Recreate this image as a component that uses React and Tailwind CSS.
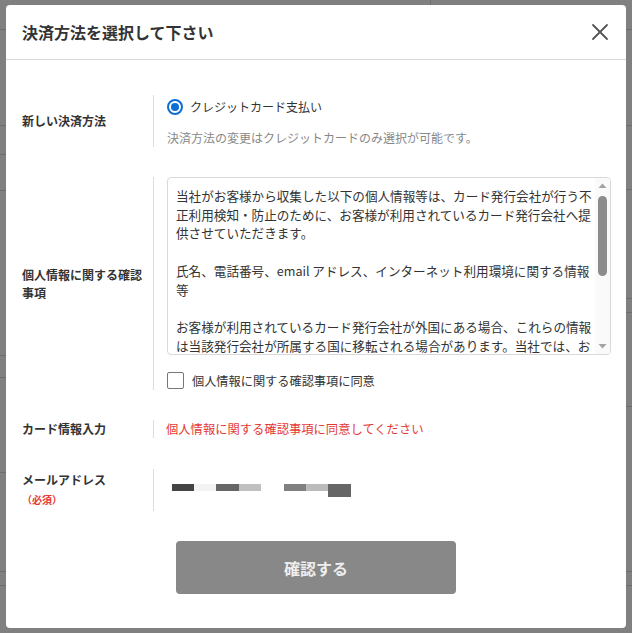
import React from "react";

const font = { fontFamily: '"Noto Sans CJK JP", "Noto Sans", sans-serif' };

function Row({ label, children, className = "" }) {
  return (
    <div className={`flex items-center ${className}`}>
      <div className="w-[131px] shrink-0 text-[12px] font-bold text-[#333] leading-[18px]">{label}</div>
      <div className="flex-1 border-l border-[#ddd] pl-[13px] self-stretch flex flex-col justify-center">{children}</div>
    </div>
  );
}

export default function App() {
  return (
    <div className="relative w-[632px] h-[633px] bg-[#808080] overflow-hidden" style={font}>
      {/* background page lines behind overlay */}
      <div className="absolute left-0 w-[6px] top-[29px] h-px bg-[#6e6e6e]" />
      <div className="absolute left-0 w-[6px] top-[125px] h-px bg-[#6e6e6e]" />
      <div className="absolute left-0 w-[6px] top-[154px] h-px bg-[#6e6e6e]" />
      <div className="absolute left-0 w-[6px] top-[190px] h-px bg-[#6e6e6e]" />
      <div className="absolute left-0 w-[6px] top-[355px] h-px bg-[#6e6e6e]" />
      <div className="absolute left-0 w-[6px] top-[377px] h-px bg-[#6e6e6e]" />
      <div className="absolute left-0 w-[6px] top-[472px] h-px bg-[#6e6e6e]" />
      <div className="absolute left-0 w-[6px] top-[571px] h-px bg-[#6e6e6e]" />
      <div className="absolute left-0 w-[6px] top-[585px] h-px bg-[#6e6e6e]" />
      <div className="absolute right-0 w-[6px] top-[29px] h-px bg-[#6e6e6e]" />
      <div className="absolute right-0 w-[6px] top-[125px] h-px bg-[#6e6e6e]" />
      <div className="absolute right-0 w-[6px] top-[189px] h-px bg-[#6e6e6e]" />
      <div className="absolute right-0 w-[6px] top-[298px] h-px bg-[#6e6e6e]" />
      <div className="absolute right-0 w-[6px] top-[312px] h-px bg-[#6e6e6e]" />
      <div className="absolute right-0 w-[6px] top-[406px] h-px bg-[#6e6e6e]" />
      <div className="absolute right-0 w-[6px] top-[571px] h-px bg-[#6e6e6e]" />
      <div className="absolute right-0 w-[6px] top-[585px] h-px bg-[#6e6e6e]" />
      <div className="absolute left-[430px] top-0 w-px h-[5px] bg-[#6e6e6e]" />

      {/* modal */}
      <div className="absolute left-[6px] top-[5px] w-[620px] h-[623px] bg-white rounded-[4px] flex flex-col">
        <div className="h-[55px] shrink-0 border-b border-[#d9d9d9] flex items-center justify-between pl-[16px] pr-[16px]">
          <div className="text-[16px] font-bold text-[#333] leading-[24px]">決済方法を選択して下さい</div>
          <svg width="18" height="18" viewBox="0 0 18 18" className="mr-[1px]">
            <path d="M2 2 L16 16 M16 2 L2 16" stroke="#555" strokeWidth="1.8" strokeLinecap="round" />
          </svg>
        </div>

        <div className="pt-[35px] pl-[16px] pr-[15px] flex flex-col">
          <Row label="新しい決済方法" className="h-[52px]">
            <div className="flex items-center h-[24px]">
              <div className="w-[16px] h-[16px] rounded-full border-[2px] border-[#0d6ed6] flex items-center justify-center">
                <div className="w-[8px] h-[8px] rounded-full bg-[#0d6ed6]" />
              </div>
              <span className="ml-[7px] text-[12px] text-[#333] leading-[18px]">クレジットカード支払い</span>
            </div>
            <div className="mt-[9px] text-[12px] text-[#888] leading-[19px]">決済方法の変更はクレジットカードのみ選択が可能です。</div>
          </Row>

          <Row label={<span className="block pr-[6px]">個人情報に関する確認事項</span>} className="mt-[30px] h-[213px]">
            <div className="h-[178px] border border-[#d9d9d9] rounded-[4px] overflow-hidden flex">
              <div className="flex-1 pt-[9px] pl-[8px] pr-0 text-[12.6px] text-[#333] leading-[18.7px]">
                <p>当社がお客様から収集した以下の個人情報等は、カード発行会社が行う不正利用検知・防止のために、お客様が利用されているカード発行会社へ提供させていただきます。</p>
                <p className="mt-[18.7px]">氏名、電話番号、email アドレス、インターネット利用環境に関する情報等</p>
                <p className="mt-[18.7px]">お客様が利用されているカード発行会社が外国にある場合、これらの情報は当該発行会社が所属する国に移転される場合があります。当社では、お客様から収集した情報をもとに、不正利用のおそれがある場合、当該会社が情報を利用することがあります。</p>
              </div>
              <div className="w-[15px] shrink-0 bg-[#fafafa] flex flex-col items-center">
                <svg width="15" height="15" viewBox="0 0 15 15">
                  <path d="M3.5 10 L7.5 5.5 L11.5 10 Z" fill="#a3a3a3" />
                </svg>
                <div className="mt-[3px] w-[9px] h-[80px] rounded-full bg-[#8c8c8c]" />
                <div className="flex-1" />
                <svg width="15" height="15" viewBox="0 0 15 15">
                  <path d="M3.5 5 L7.5 9.5 L11.5 5 Z" fill="#a3a3a3" />
                </svg>
              </div>
            </div>
            <div className="mt-[16px] flex items-center h-[19px]">
              <div className="w-[17px] h-[17px] border border-[#767676] rounded-[2px] bg-white" />
              <span className="ml-[8px] text-[12.2px] text-[#333] leading-[18px]">個人情報に関する確認事項に同意</span>
            </div>
          </Row>

          <Row label="カード情報入力" className="mt-[30px] h-[18px]">
            <div className="text-[12.3px] text-[#e53935] leading-[18px] -ml-[1px]">個人情報に関する確認事項に同意してください</div>
          </Row>

          <Row
            label={
              <div className="flex flex-col">
                <span className="leading-[20px]">メールアドレス</span>
                <span className="text-[10px] text-[#e53935] leading-[20px]">（必須）</span>
              </div>
            }
            className="mt-[31px] h-[42px]"
          >
            <div className="flex items-start pl-[5px] h-[13px]">
              <div className="w-[22px] h-[7px] bg-[#444]" />
              <div className="w-[22px] h-[7px] bg-[#f3f3f3]" />
              <div className="w-[23px] h-[7px] bg-[#666]" />
              <div className="w-[22px] h-[7px] bg-[#c0c0c0]" />
              <div className="w-[23px]" />
              <div className="w-[22px] h-[7px] bg-[#808080]" />
              <div className="w-[22px] h-[7px] bg-[#bbb]" />
              <div className="w-[23px] h-[13px] bg-[#666]" />
            </div>
          </Row>

          <div className="mt-[30px] flex justify-center pr-[1px]">
            <button className="w-[280px] h-[53px] bg-[#888] rounded-[4px] text-[16px] font-bold text-[#eee]">確認する</button>
          </div>
        </div>
      </div>
    </div>
  );
}
